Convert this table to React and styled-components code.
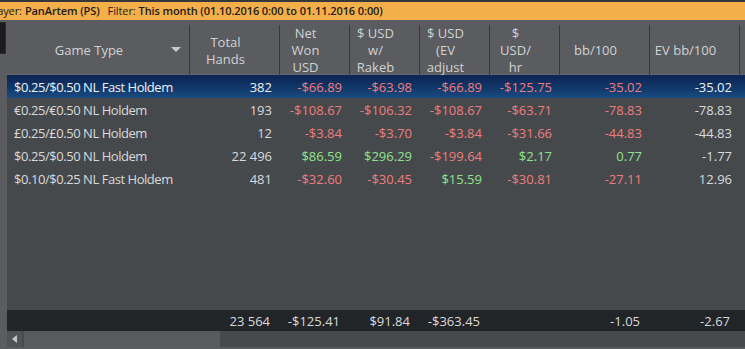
import styled, { createGlobalStyle } from "styled-components";

const GlobalStyle = createGlobalStyle`
  html, body {
    margin: 0;
    padding: 0;
    width: 745px;
    height: 349px;
    overflow: hidden;
    background: #5a5c5f;
    font-family: "Open Sans", "Noto Sans", "DejaVu Sans", sans-serif;
  }
`;

const COLS = "183px 90px 70px 70px 70px 70px 90px 90px 1fr";

const Screen = styled.div`
  width: 745px;
  height: 349px;
  display: flex;
  flex-direction: column;
  overflow: hidden;
  border-top: 2px solid #35373a;
  box-sizing: border-box;
`;

const FilterBar = styled.div`
  height: 18px;
  background: #f4af4b;
  color: #1b1b1b;
  font-size: 11px;
  letter-spacing: -0.1px;
  line-height: 18px;
  white-space: nowrap;
  overflow: hidden;

  span {
    margin-right: 3px;
  }
  b {
    font-weight: 600;
    margin-right: 8px;
  }
  .clip {
    margin-left: -12px;
  }
`;

const Main = styled.div`
  flex: 1;
  display: flex;
  min-height: 0;
`;

const Rail = styled.div`
  width: 7px;
  flex: none;
  background: #5a5c5f;
  padding-top: 2px;
`;

const RailTab = styled.div`
  width: 6px;
  height: 32px;
  background: #1c1c1d;
  border: 1px solid #2a2b2c;
  border-left: none;
  box-sizing: border-box;
`;

const Table = styled.div`
  flex: 1;
  display: flex;
  flex-direction: column;
  min-width: 0;
`;

const HeaderRow = styled.div`
  height: 54px;
  display: grid;
  grid-template-columns: ${COLS};
  background: #5a5c5f;
  color: #d2d3d4;
  font-size: 13px;
  line-height: 17px;
`;

const HeaderCell = styled.div`
  margin: 5px 0 1px;
  padding-right: ${(p) => (p.$pad ?? 18)}px;
  border-right: ${(p) => (p.$last ? "none" : "1px solid #36383a")};
  display: flex;
  align-items: center;
  justify-content: center;
  text-align: center;
  position: relative;
  white-space: nowrap;
`;

const DropArrow = styled.span`
  position: absolute;
  right: 8px;
  top: 22px;
  width: 0;
  height: 0;
  border-left: 5px solid transparent;
  border-right: 5px solid transparent;
  border-top: 5px solid #c9cacb;
`;

const Body = styled.div`
  flex: 1;
  background: #46494c;
  border-top: 1px solid #66696c;
`;

const Row = styled.div`
  display: grid;
  grid-template-columns: ${COLS};
  height: 23px;
  align-items: center;
  font-size: 13px;
  color: ${(p) => (p.$selected ? "#eef1f6" : "#d9dadb")};
  background: ${(p) =>
    p.$selected ? "linear-gradient(#0a2353, #12396b 60%, #1b4b80)" : "transparent"};
`;

const Cell = styled.div`
  padding: 0 ${(p) => (p.$left ? "0 0 7px" : "8px 0 0")};
  text-align: ${(p) => (p.$left ? "left" : "right")};
  letter-spacing: ${(p) => (p.$left ? "-0.45px" : "0")};
  white-space: nowrap;
  overflow: hidden;
  color: ${(p) =>
    p.$tone === "neg" ? "#ef7d7c" : p.$tone === "pos" ? "#8fe38c" : "inherit"};
`;

const Footer = styled.div`
  height: 21px;
  display: grid;
  grid-template-columns: ${COLS};
  align-items: center;
  background: #222528;
  color: #d9dadb;
  font-size: 13px;

  ${Cell} {
    padding-right: 10px;
  }
`;

const ScrollBar = styled.div`
  height: 16px;
  display: flex;
  gap: 2px;
  background: #474a4d;
  border-bottom: 2px solid #5a5c5f;
`;

const ScrollBtn = styled.div`
  width: 15px;
  background: #505356;
  display: flex;
  align-items: center;
  justify-content: center;

  &::before {
    content: "";
    border-top: 4px solid transparent;
    border-bottom: 4px solid transparent;
    border-right: 5px solid #c4c5c6;
  }
`;

const Thumb = styled.div`
  width: 196px;
  background: #585b5e;
`;

const rows = [
  {
    game: "$0.25/$0.50 NL Fast Holdem",
    hands: "382",
    vals: [["-$66.89", "neg"], ["-$63.98", "neg"], ["-$66.89", "neg"], ["-$125.75", "neg"], ["-35.02", "neg"], ["-35.02"]],
    selected: true,
  },
  {
    game: "€0.25/€0.50 NL Holdem",
    hands: "193",
    vals: [["-$108.67", "neg"], ["-$106.32", "neg"], ["-$108.67", "neg"], ["-$63.71", "neg"], ["-78.83", "neg"], ["-78.83"]],
  },
  {
    game: "£0.25/£0.50 NL Holdem",
    hands: "12",
    vals: [["-$3.84", "neg"], ["-$3.70", "neg"], ["-$3.84", "neg"], ["-$31.66", "neg"], ["-44.83", "neg"], ["-44.83"]],
  },
  {
    game: "$0.25/$0.50 NL Holdem",
    hands: "22 496",
    vals: [["$86.59", "pos"], ["$296.29", "pos"], ["-$199.64", "neg"], ["$2.17", "pos"], ["0.77", "pos"], ["-1.77"]],
  },
  {
    game: "$0.10/$0.25 NL Fast Holdem",
    hands: "481",
    vals: [["-$32.60", "neg"], ["-$30.45", "neg"], ["$15.59", "pos"], ["-$30.81", "neg"], ["-27.11", "neg"], ["12.96"]],
  },
];

const totals = ["23 564", "-$125.41", "$91.84", "-$363.45", "", "-1.05", "-2.67"];

export default function App() {
  return (
    <Screen>
      <GlobalStyle />
      <FilterBar>
        <span className="clip">Player:</span>
        <b>PanArtem (PS)</b>
        <span>Filter:</span>
        <b>This month (01.10.2016 0:00 to 01.11.2016 0:00)</b>
      </FilterBar>
      <Main>
        <Rail>
          <RailTab />
        </Rail>
        <Table>
          <HeaderRow>
            <HeaderCell>
              Game Type
              <DropArrow />
            </HeaderCell>
            <HeaderCell>
              Total
              <br />
              Hands
            </HeaderCell>
            <HeaderCell>
              Net
              <br />
              Won
              <br />
              USD
            </HeaderCell>
            <HeaderCell>
              $ USD
              <br />
              w/
              <br />
              Rakeb
            </HeaderCell>
            <HeaderCell>
              $ USD
              <br />
              (EV
              <br />
              adjust
            </HeaderCell>
            <HeaderCell>
              $
              <br />
              USD/
              <br />
              hr
            </HeaderCell>
            <HeaderCell>bb/100</HeaderCell>
            <HeaderCell>EV bb/100</HeaderCell>
            <HeaderCell $last $pad={0} />
          </HeaderRow>
          <Body>
            {rows.map((r) => (
              <Row key={r.game} $selected={r.selected}>
                <Cell $left>{r.game}</Cell>
                <Cell>{r.hands}</Cell>
                {r.vals.map(([v, tone], i) => (
                  <Cell key={i} $tone={tone}>
                    {v}
                  </Cell>
                ))}
              </Row>
            ))}
          </Body>
          <Footer>
            <Cell $left />
            {totals.map((t, i) => (
              <Cell key={i}>{t}</Cell>
            ))}
          </Footer>
          <ScrollBar>
            <ScrollBtn />
            <Thumb />
          </ScrollBar>
        </Table>
      </Main>
    </Screen>
  );
}
